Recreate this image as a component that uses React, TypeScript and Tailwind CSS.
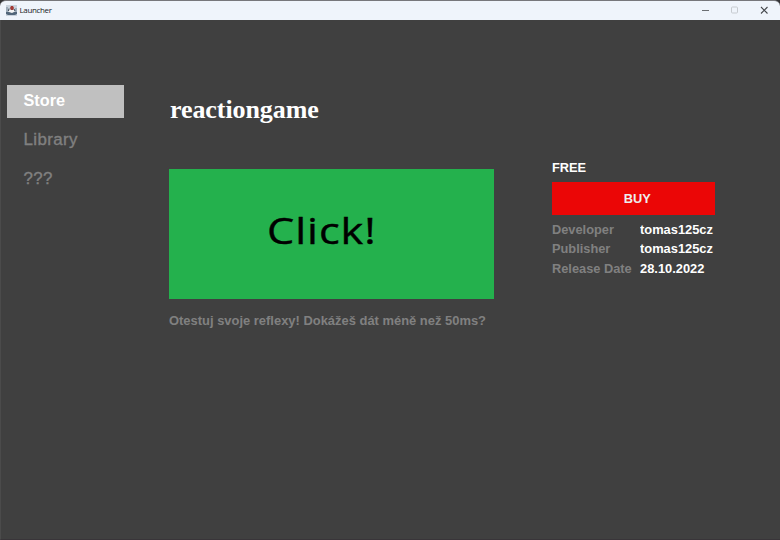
const sans = "font-['Liberation_Sans',Arial,sans-serif]";

function JavaIcon() {
  return (
    <svg width="11" height="11" viewBox="0 0 11 11" className="ml-[6px] shrink-0">
      <rect width="11" height="11" fill="#c9d2dc" />
      <path d="M0 2h2v5H0zM9 3h2v4H9z" fill="#9dabb8" />
      <path d="M0 7h11v2L9 10H2L0 9z" fill="#52667a" />
      <path d="M3 5h5v2L6 8 3 7z" fill="#f4f4f4" />
      <path d="M5 1h2l1 2-1 2H5L4 3z" fill="#a33a35" />
      <path d="M3 3.5 2.5 6M8 4 9 6" stroke="#3c4855" fill="none" />
    </svg>
  );
}

function TitleBar() {
  return (
    <header className="flex h-5 items-center rounded-t-[6px] border-t border-[#77777b] bg-[#eff4fb]">
      <JavaIcon />
      <span className="ml-[2.5px] pb-px font-['Open_Sans','Noto_Sans',sans-serif] text-[8px] leading-none tracking-[-0.35px] text-[#202024]">Launcher</span>
      <svg className="mb-px ml-auto mr-[12px]" width="68" height="10" viewBox="0 0 68 10" fill="none">
        <path d="M2 5.5h7" stroke="#6c6f73" />
        <rect x="31.5" y="2" width="6" height="6" rx="1" stroke="#c7cbd0" />
        <path d="m61 2 6.5 6.5m0-6.5L61 8.5" stroke="#44474b" strokeWidth="1.1" />
      </svg>
    </header>
  );
}

function Detail({ label, value }: { label: string; value: string }) {
  return (
    <div className="flex h-[19.5px] items-center">
      <dt className="w-[87.5px] shrink-0 origin-left scale-x-[0.948] whitespace-nowrap text-[#808080]">{label}</dt>
      <dd className="origin-left scale-x-[0.953] whitespace-nowrap text-white">{value}</dd>
    </div>
  );
}

export default function App() {
  return (
    <div className="h-[540px] w-[780px] overflow-hidden bg-[#343436]">
      <TitleBar />
      <div className={`flex h-[520px] border-l border-b border-l-[#4b4b4b] border-b-[#393539] bg-[#404040] font-bold ${sans}`}>
        <nav className="ml-[6px] mt-[65px] flex w-[117px] flex-col gap-[6px] text-[16.25px] text-[#808080]">
          <a className="flex h-[33px] items-center bg-[#c0c0c0] pb-[2px] pl-[16.5px] text-white">Store</a>
          <a className="flex h-[33px] items-center pb-[2px] pl-[16.5px] text-[16.9px] font-normal tracking-[0.4px] [-webkit-text-stroke:0.35px_#808080]">Library</a>
          <a className="flex h-[33px] items-center pb-[2px] pl-[16.5px] text-[16.9px] font-normal tracking-[0.3px] [-webkit-text-stroke:0.35px_#808080]">???</a>
        </nav>
        <main className="ml-[45px] w-[325px] pt-[72px]">
          <h1 className="h-[77px] pl-px pt-[3px] font-['Liberation_Serif','Times_New_Roman',serif] text-[26px] leading-[30px] tracking-[-0.08px] text-white">reactiongame</h1>
          <div className="flex h-[130px] items-center bg-[#24b14d] pl-[98px] pb-[7px] font-['Open_Sans','Noto_Sans',sans-serif] text-[36px] font-normal text-black">
            <span className="origin-left scale-x-[1.2] tracking-[0.8px] [-webkit-text-stroke:0.4px_black]">Click!</span>
          </div>
          <p className="mt-[13px] origin-left scale-x-[0.958] whitespace-nowrap text-[13.5px] leading-[18px] text-[#808080]">Otestuj svoje reflexy! Dokážeš dát méně než 50ms?</p>
        </main>
        <aside className="ml-[58px] w-[163px] pt-[139px] text-[13.5px]">
          <div className="h-[23px] origin-left scale-x-[0.948] leading-[18px] text-white">FREE</div>
          <button className="flex h-[33px] w-full items-center justify-center bg-[#eb0606] pl-[7px] pt-px text-[#eeeeee]">
            <span className="scale-x-[0.948]">BUY</span>
          </button>
          <dl className="mt-[5.3px]">
            <Detail label="Developer" value="tomas125cz" />
            <Detail label="Publisher" value="tomas125cz" />
            <Detail label="Release Date" value="28.10.2022" />
          </dl>
        </aside>
      </div>
    </div>
  );
}
